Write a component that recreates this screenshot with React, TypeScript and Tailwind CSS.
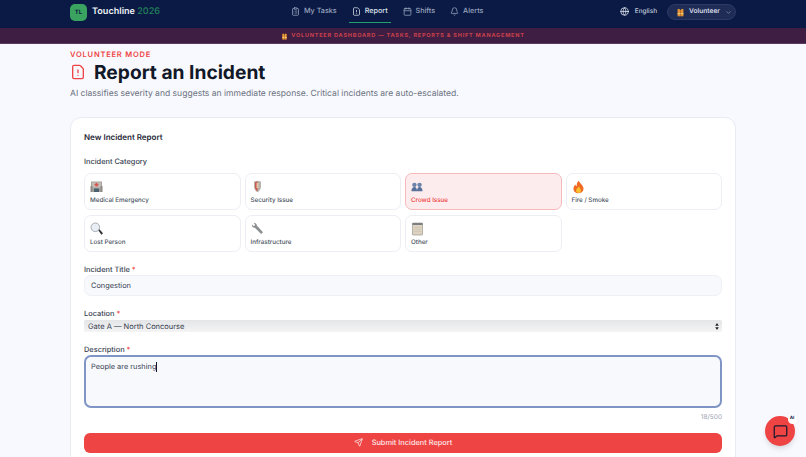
import React from "react";
import { ClipboardList, FileWarning, Calendar, Bell, Globe, ChevronDown, Send, MessageSquare } from "lucide-react";

const Vest = ({ s = 11 }: { s?: number }) => (
  <svg width={s} height={s} viewBox="0 0 12 12">
    <path d="M2 1.500 4 1 6 3 8 1l2 .5V11H2z" fill="#d9822b" />
    <rect x="3.400" y="1.500" width="1.200" height="9.500" fill="#e8b04a" />
    <rect x="7.400" y="1.500" width="1.200" height="9.500" fill="#e8b04a" />
    <rect x="2" y="7" width="8" height="1.200" fill="#f0d890" />
    <path d="M5.800 3h.4v8h-.4z" fill="#8a4a12" />
  </svg>
);
const Hospital = () => (
  <svg width="13" height="13" viewBox="0 0 13 13">
    <rect x="1" y="1.500" width="11" height="10.500" fill="#a8a39e" />
    <rect x="2" y="2.500" width="9" height="5" fill="#c4bdb6" />
    <path d="M5.600 3h1.800v1h1v1.400h-1v1H5.600v-1h-1V4h1z" fill="#d9534f" />
    <rect x="4" y="8.500" width="5" height="3.500" fill="#4a626d" />
    <rect x="0.500" y="6" width="2" height="6" fill="#8c8987" />
    <rect x="10.500" y="6" width="2" height="6" fill="#8c8987" />
  </svg>
);
const Shield = () => (
  <svg width="13" height="13" viewBox="0 0 13 13">
    <path d="M3 1.500 6.500.7l3.500.8v5c0 2.800-1.700 4.600-3.500 5.800C4.700 11.100 3 9.300 3 6.500z" fill="#b9b3ad" />
    <path d="M4 2.200 6.500 1.600v10C5 10.600 4 9 4 6.600z" fill="#c9574f" />
    <rect x="5.500" y="3" width="1.800" height="5" fill="#e7c9a8" />
  </svg>
);
const People = () => (
  <svg width="12" height="12" viewBox="0 0 14 13">
    <circle cx="4" cy="4" r="2.600" fill="#6b83a8" />
    <circle cx="10" cy="4" r="2.600" fill="#6b83a8" />
    <path d="M.5 11.500c0-3 1.400-5 3.500-5s3 2 3 5z" fill="#56709a" />
    <path d="M7 11.500c0-3 1-5 3-5s3.500 2 3.500 5z" fill="#56709a" />
  </svg>
);
const Fire = () => (
  <svg width="13" height="14" viewBox="0 0 13 14">
    <path d="M6.800.8c.5 2.200 4.700 4.200 4.700 8 0 2.800-2.200 4.400-5 4.400s-5-1.700-5-4.500c0-2 1-3.200 2-4.200.2 1 .6 1.500 1.200 1.800C4.600 4 5.200 2 6.800.8z" fill="#ef6a22" />
    <path d="M6.700 6.500c.4 1.200 2.300 2 2.300 4 0 1.500-1.100 2.500-2.500 2.500S4 12 4 10.500c0-1.500 2-2.500 2.700-4z" fill="#fbc02d" />
  </svg>
);
const Magnifier = () => (
  <svg width="14" height="14" viewBox="0 0 14 14">
    <path d="m7.800 7.800 1.200-1 4 4.400-1.600 1.500z" fill="#333" />
    <circle cx="5.300" cy="5.300" r="4.300" fill="#e8eef4" stroke="#a7adb3" strokeWidth="1" />
  </svg>
);
const Wrench = () => (
  <svg width="13" height="13" viewBox="0 0 13 13">
    <path d="M1 2.600 2.800 4.200 4.200 3 2.800 1.100C4.500.5 6 1.800 5.800 3.600l6.200 6.600-1.800 1.800-6.400-6.300C2.200 6 .6 4.500 1 2.600z" fill="#8c8f92" />
  </svg>
);
const Memo = () => (
  <svg width="13" height="14" viewBox="0 0 13 14">
    <rect x="1.500" y="1" width="10" height="12" rx=".6" fill="#ddd3c0" stroke="#8f8a80" strokeWidth=".6" />
    <rect x="1.500" y="1" width="10" height="2" fill="#7b7f84" />
    <path d="M3 5.500h7M3 7.500h7M3 9.500h7" stroke="#c9c0ae" strokeWidth=".6" />
  </svg>
);

const Label = ({ children, req }: { children: React.ReactNode; req?: boolean }) => (
  <div className="pt-[1px] text-[7.4px] leading-[11px] font-medium text-[#374151]">
    {children}
    {req && <span className="text-[#ef4444]"> *</span>}
  </div>
);

const Cat = ({ icon, label, active }: { icon: React.ReactNode; label: string; active?: boolean }) => (
  <div className={`h-[37px] rounded-[7px] border px-[5px] pt-[5px] flex flex-col ${active ? "bg-[#fdecee] border-[#f6b9bb]" : "bg-white border-[#eceef3]"}`}>
    <div className="h-[15px] flex items-center">{icon}</div>
    <div className={`mt-[1px] text-[6.25px] leading-[10px] font-medium ${active ? "text-[#ef4444]" : "text-[#4b5563]"}`}>{label}</div>
  </div>
);

const Nav = ({ icon, label, active }: { icon: React.ReactNode; label: string; active?: boolean }) => (
  <div className={`h-[21px] px-[3px] flex items-center gap-[4px] text-[7.2px] font-medium border-b-[1.5px] ${active ? "text-[#dfe4ee] border-[#22a06b]" : "text-[#9aa5bd] border-transparent"}`}>
    {icon}
    {label}
  </div>
);

export default function App() {
  return (
    <div className="h-[457px] overflow-hidden bg-[#f8f9fe] relative [text-rendering:geometricPrecision]" style={{ fontFamily: "Inter, 'Liberation Sans', sans-serif" }}>
      <header className="h-[28px] bg-[#0a1a45] pl-[70px]">
        <div className="w-[666px] h-[24px] flex items-center">
          <div className="flex items-center gap-[5px] w-[218px]">
            <div className="w-[17px] h-[17px] rounded-[5px] bg-[#3aa35f] flex items-center justify-center text-[6px] font-bold text-[#0a1a45]">TL</div>
            <div className="text-[9.1px] font-semibold text-[#eef1f6]">Touchline <span className="font-medium text-[#22805a]">2026</span></div>
          </div>
          <nav className="flex items-center gap-[9px]">
            <Nav icon={<ClipboardList size={9} />} label="My Tasks" />
            <Nav active icon={<FileWarning size={9} />} label="Report" />
            <Nav icon={<Calendar size={9} />} label="Shifts" />
            <Nav icon={<Bell size={9} />} label="Alerts" />
          </nav>
          <div className="ml-auto flex items-center gap-[10px]">
            <div className="flex items-center gap-[6px] text-[6.4px] font-medium text-[#c7cede]"><Globe size={9} className="text-[#e5e9f2]" />English</div>
            <div className="h-[16px] w-[69px] rounded-full bg-[#1f2d56] border border-[#2c3a63] flex items-center pl-[8px] gap-[4px] text-[6.6px] font-semibold text-[#d6dbe7]"><Vest s={9} />Volunteer<ChevronDown size={7} className="ml-[1px] text-[#9aa5bd]" /></div>
          </div>
        </div>
      </header>
      <div className="h-[16px] pt-[1px] bg-[#3e1f43] border-b border-[#5b3b60] flex items-center justify-center gap-[3px] text-[5.5px] font-bold tracking-[0.8px] text-[#c93f4b]"><Vest s={7} />VOLUNTEER DASHBOARD — TASKS, REPORTS &amp; SHIFT MANAGEMENT</div>
      <main className="w-[666px] ml-[70px]">
        <div className="mt-[5px] pt-[1px] text-[7.5px] leading-[9px] font-semibold tracking-[0.8px] text-[#ef4444]">VOLUNTEER MODE</div>
        <h1 className="flex items-center gap-[8px] text-[19.2px] leading-[26px] font-bold text-[#111827]"><FileWarning size={16} className="text-[#ef4444]" />Report an Incident</h1>
        <p className="mt-[2px] text-[8.55px] leading-[14px] text-[#6b7280]">AI classifies severity and suggests an immediate response. Critical incidents are auto-escalated.</p>
        <section className="mt-[16px] bg-white rounded-t-[11px] border border-[#e8ebf2] px-[13px] pt-[13px] pb-[20px]">
          <h2 className="text-[8px] leading-[12px] font-semibold text-[#1f2937]">New Incident Report</h2>
          <div className="mt-[12px]"><Label>Incident Category</Label></div>
          <div className="mt-[6px] grid grid-cols-4 gap-x-[4px] gap-y-[5px]">
            <Cat icon={<Hospital />} label="Medical Emergency" />
            <Cat icon={<Shield />} label="Security Issue" />
            <Cat active icon={<People />} label="Crowd Issue" />
            <Cat icon={<Fire />} label="Fire / Smoke" />
            <Cat icon={<Magnifier />} label="Lost Person" />
            <Cat icon={<Wrench />} label="Infrastructure" />
            <Cat icon={<Memo />} label="Other" />
          </div>
          <div className="mt-[11px]"><Label req>Incident Title</Label></div>
          <div className="h-[21px] rounded-[7px] bg-[#f8f9fd] border border-[#eef0f5] flex items-center px-[6px] text-[7.4px] text-[#374151]">Congestion</div>
          <div className="mt-[11px]"><Label req>Location</Label></div>
          <div className="mt-[1px] h-[12px] pt-[1px] rounded-[2px] bg-gradient-to-b from-[#e4e5e7] to-[#f4f4f5] flex items-center justify-between pl-[4px] pr-[3px] text-[7.5px] text-[#374151]">
            <span>Gate A — North Concourse</span>
            <svg width="4" height="7" viewBox="0 0 4 7"><path d="M2 0 3.800 2.800H.2zM2 7 .2 4.200h3.600z" fill="#222" /></svg>
          </div>
          <div className="mt-[11px]"><Label req>Description</Label></div>
          <div className="h-[53px] rounded-[7px] bg-[#f8f9fd] border-2 border-[#7f95c6] px-[5px] pt-[4px] text-[7.4px] leading-[12px] text-[#374151] flex items-start">People are rushing<span className="inline-block mt-[1px] w-[1px] h-[10px] bg-[#111827]" /></div>
          <div className="mt-[5px] text-right text-[6.5px] leading-[9px] text-[#9ca3af]">18/500</div>
          <div className="mt-[11px] h-[19.500px] rounded-[6px] bg-[#ef4444] flex items-center justify-center gap-[9px] text-[7.4px] font-medium text-[#fde8e8]"><Send size={9} />Submit Incident Report</div>
        </section>
      </main>
      <div className="absolute left-[765px] top-[416px] w-[30px] h-[30px] rounded-full bg-[#ef4444] shadow-md flex items-center justify-center text-[#1a1a2e]">
        <MessageSquare size={15} />
        <div className="absolute -right-[1.500px] -top-[1.500px] w-[9px] h-[9px] rounded-full bg-white text-[4.500px] font-bold text-[#0a1a45] flex items-center justify-center">AI</div>
      </div>
    </div>
  );
}
